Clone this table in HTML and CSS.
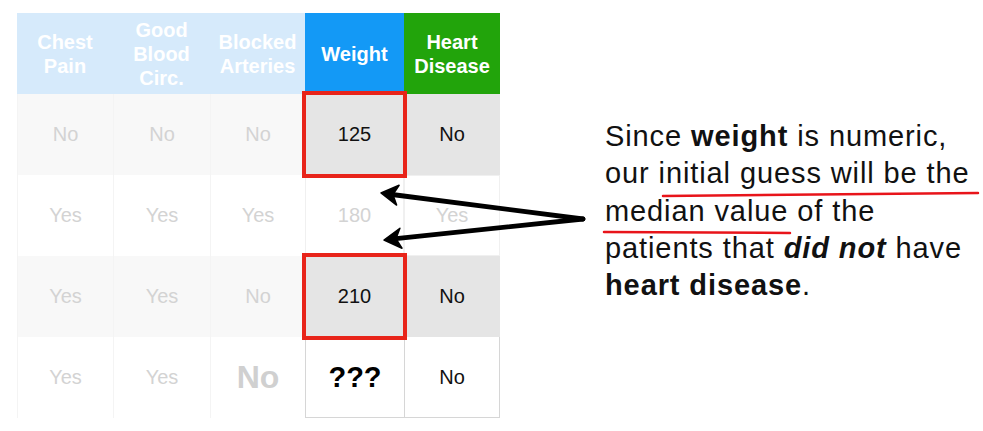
FILE: index.html
```html
<!DOCTYPE html>
<html>
<head>
<meta charset="utf-8">
<link rel="stylesheet" href="styles.css">
</head>
<body>
<div class="page">
  <div class="table">
    <div class="hd faded">Chest<br>Pain</div>
    <div class="hd faded">Good<br>Blood<br>Circ.</div>
    <div class="hd faded">Blocked<br>Arteries</div>
    <div class="hd weight">Weight</div>
    <div class="hd heart">Heart<br>Disease</div>

    <div class="c f g">No</div>
    <div class="c f g">No</div>
    <div class="c f g">No</div>
    <div class="c a g hl">125</div>
    <div class="c a g">No</div>

    <div class="c f">Yes</div>
    <div class="c f">Yes</div>
    <div class="c f">Yes</div>
    <div class="c f bx">180</div>
    <div class="c f bx">Yes</div>

    <div class="c f g">Yes</div>
    <div class="c f g">Yes</div>
    <div class="c f g">No</div>
    <div class="c a g hl">210</div>
    <div class="c a g">No</div>

    <div class="c f">Yes</div>
    <div class="c f">Yes</div>
    <div class="c f big">No</div>
    <div class="c a bd q">???</div>
    <div class="c a bd last">No</div>
  </div>

  <p class="note">Since <b>weight</b> is numeric, our initial guess will be the median value of the patients that <b><i>did not</i></b> have <b>heart disease</b>.</p>
</div>

<svg class="overlay" width="983" height="431" viewBox="0 0 983 431">
  <g fill="none" stroke="#000" stroke-width="4.8" stroke-linecap="round">
    <line x1="583" y1="219" x2="392" y2="194.5"/>
    <line x1="583" y1="219" x2="396" y2="238.7"/>
  </g>
  <g fill="#000" stroke="#000" stroke-width="1.5" stroke-linejoin="round">
    <path d="M381 193 L399.1 185.3 L392.9 194.5 L396.6 205.1 Z"/>
    <path d="M384 240 L399.9 228.3 L395.9 238.7 L402 248.2 Z"/>
  </g>
  <g stroke="#e8141a" stroke-width="2.5" stroke-linecap="round">
    <line x1="663" y1="196" x2="978" y2="193"/>
    <line x1="604" y1="232" x2="790" y2="233"/>
  </g>
</svg>
</body>
</html>
```

FILE: styles.css
```css
html, body {
  margin: 0;
  padding: 0;
  background: #ffffff;
}

body {
  width: 983px;
  height: 431px;
  overflow: hidden;
  position: relative;
  font-family: "Liberation Sans", Arial, Helvetica, sans-serif;
  color: #111;
}

.page {
  display: flex;
  align-items: flex-start;
  padding: 13px 0 0 17px;
}

.table {
  display: grid;
  grid-template-columns: 96px 97px 95px 99px 96px;
  grid-auto-rows: 81px;
  flex: none;
}

.hd {
  display: flex;
  align-items: center;
  justify-content: center;
  text-align: center;
  font-weight: bold;
  font-size: 20px;
  line-height: 24px;
  color: #ffffff;
}

.hd.faded {
  background: #d6eafb;
}

.hd.weight {
  background: #1399f6;
}

.hd.heart {
  background: #22a40b;
}

.c {
  display: flex;
  align-items: center;
  justify-content: center;
  font-size: 20px;
  box-sizing: border-box;
}

.c.f {
  color: #d3d3d3;
  border-left: 1px solid #f4f4f4;
}

.c.g.f {
  background: #f8f8f8;
}

.c.a {
  color: #111;
}

.c.a.g {
  background: #e5e5e5;
}

.c.bx {
  border: 1px solid #f0f0f0;
}

.c.bd {
  border-left: 1px solid #d6d6d6;
  border-bottom: 1px solid #d6d6d6;
}

.c.bd.last {
  border-right: 1px solid #d6d6d6;
}

.c.hl {
  position: relative;
  z-index: 1;
  outline: 4px solid #e8241a;
  outline-offset: -1px;
}

.c.big {
  font-weight: bold;
  font-size: 32px;
  color: #d0d0d0;
}

.c.q {
  font-weight: bold;
  font-size: 29px;
  color: #000;
}

.note {
  margin: 105px 0 0 105px;
  width: 380px;
  font-size: 29px;
  line-height: 37.3px;
  letter-spacing: 0.9px;
  color: #111;
}

.overlay {
  position: absolute;
  left: 0;
  top: 0;
  pointer-events: none;
}
```
